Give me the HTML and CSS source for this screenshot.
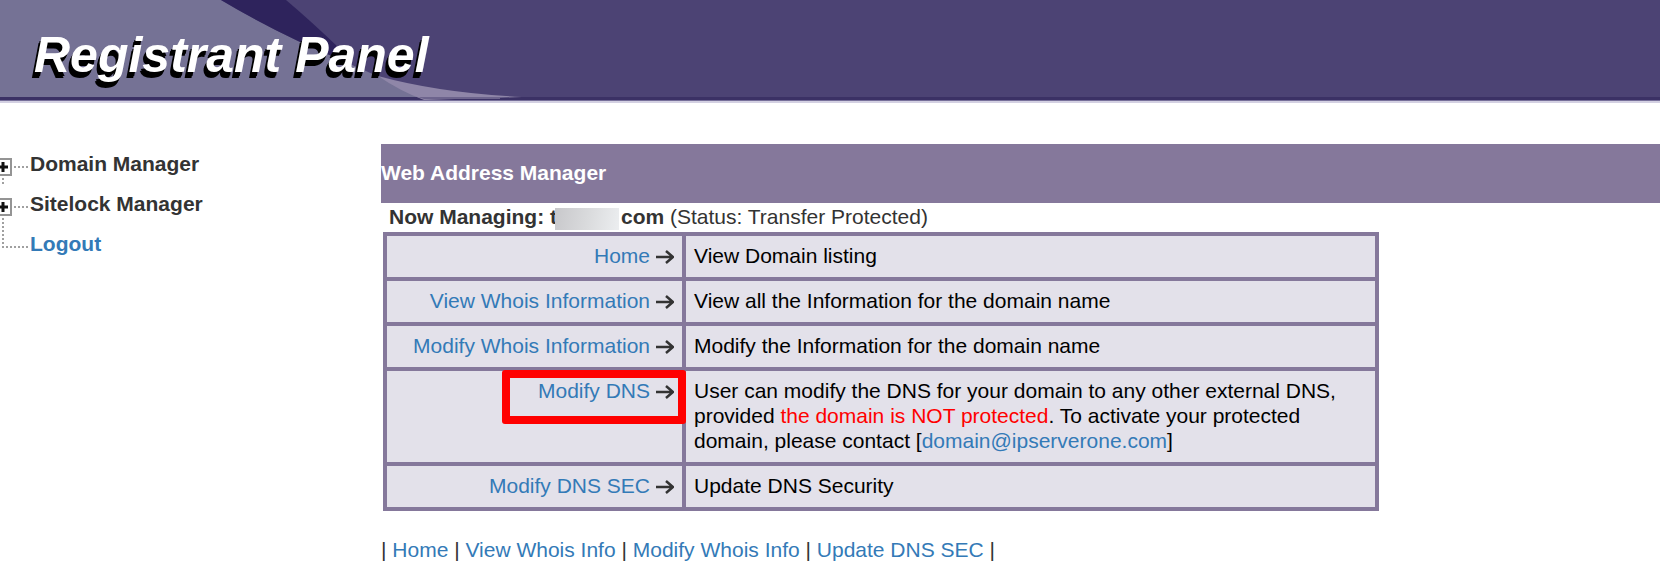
FILE: index.html
```html
<!DOCTYPE html>
<html lang="en">
<head>
  <meta charset="UTF-8" />
  <meta name="viewport" content="width=device-width, initial-scale=1.0"/>
  <title>Registrant Panel</title>
  <link rel="stylesheet" href="styles.css">
</head>
<body>

  <!-- Banner -->
  <header class="banner">
    <svg class="banner-art" width="560" height="103" viewBox="0 0 560 103" aria-hidden="true">
      <path d="M0 0H221Q258 22 298 41Q345 62 382 78Q400 89 418 97H0Z" fill="#757295"/>
      <path d="M221 0H286Q312 22 340 49L350 64L298 41Q258 22 221 0Z" fill="#2e235c"/>
      <path d="M378 76Q440 93 522 97L424 100Q400 91 378 76Z" fill="#8f86a8"/>
      <path d="M418 97H500V99H424Z" fill="#6d648d"/>
    </svg>
    <h1 class="banner-title">Registrant Panel</h1>
  </header>

  <div class="layout">
    <!-- Tree menu -->
    <nav class="sidebar">
      <ul class="tree">
        <li>
          <svg width="30" height="40" viewBox="0 0 30 40" aria-hidden="true">
            <path d="M3 28V34" class="dots"/>
            <path d="M14 17H30" class="dots"/>
            <path d="M-4 9H11V25H-4Z" class="node"/>
            <path d="M-2 17H8M3 12V22" class="plus"/>
          </svg>
          <b>Domain Manager</b>
        </li>
        <li>
          <svg width="30" height="40" viewBox="0 0 30 40" aria-hidden="true">
            <path d="M3 28V40" class="dots"/>
            <path d="M14 17H30" class="dots"/>
            <path d="M-4 9H11V25H-4Z" class="node"/>
            <path d="M-2 17H8M3 12V22" class="plus"/>
          </svg>
          <b>Sitelock Manager</b>
        </li>
        <li>
          <svg width="30" height="40" viewBox="0 0 30 40" aria-hidden="true">
            <path d="M3 0V17H30" class="dots"/>
          </svg>
          <a href="#"><b>Logout</b></a>
        </li>
      </ul>
    </nav>

    <main class="content">
      <h2 class="title-bar">Web Address Manager</h2>
      <p class="managing"><b>Now Managing: t<span class="redacted"></span>com</b> (Status: Transfer Protected)</p>

      <table class="options">
        <tr>
          <td class="action"><a href="#">Home</a><svg class="arrow" viewBox="0 0 18 16"><path d="M0 8H17M10 2L17 8L10 14"/></svg></td>
          <td>View Domain listing</td>
        </tr>
        <tr>
          <td class="action"><a href="#">View Whois Information</a><svg class="arrow" viewBox="0 0 18 16"><path d="M0 8H17M10 2L17 8L10 14"/></svg></td>
          <td>View all the Information for the domain name</td>
        </tr>
        <tr>
          <td class="action"><a href="#">Modify Whois Information</a><svg class="arrow" viewBox="0 0 18 16"><path d="M0 8H17M10 2L17 8L10 14"/></svg></td>
          <td>Modify the Information for the domain name</td>
        </tr>
        <tr>
          <td class="action"><a href="#">Modify DNS</a><svg class="arrow" viewBox="0 0 18 16"><path d="M0 8H17M10 2L17 8L10 14"/></svg><span class="marker"></span></td>
          <td>User can modify the DNS for your domain to any other external DNS, provided <span class="warning">the domain is NOT protected</span>. To activate your protected domain, please contact [<a href="#">domain@ipserverone.com</a>]</td>
        </tr>
        <tr>
          <td class="action"><a href="#">Modify DNS SEC</a><svg class="arrow" viewBox="0 0 18 16"><path d="M0 8H17M10 2L17 8L10 14"/></svg></td>
          <td>Update DNS Security</td>
        </tr>
      </table>

      <p class="links">| <a href="#">Home</a> | <a href="#">View Whois Info</a> | <a href="#">Modify Whois Info</a> | <a href="#">Update DNS SEC</a> |</p>
    </main>
  </div>

</body>
</html>
```
FILE: styles.css
```css
body {
  margin: 0;
  font-family: Arial, "Liberation Sans", sans-serif;
  font-size: 21px;
  line-height: 25px;
  color: #333;
  background: #fff;
}

a {
  color: #337ab7;
  text-decoration: none;
}

a:hover {
  text-decoration: underline;
}

/* Banner */
.banner {
  position: relative;
  height: 103px;
  background: linear-gradient(#4c4374 97px, #3b3165 97px, #3b3165 100px, #77709a 100px, #77709a 101px, #d3d0e2 101px);
}

.banner-art {
  position: absolute;
  top: 0;
  left: 0;
}

.banner-title {
  position: relative;
  margin: 0;
  padding: 25px 0 0 34px;
  font-size: 50px;
  line-height: 60px;
  font-style: italic;
  color: #fff;
  text-shadow: -3px 6px 0 #000, -2px 4px 0 #000;
}

.layout {
  display: flex;
  padding-top: 41px;
}

/* Tree menu */
.sidebar {
  flex: 0 0 381px;
}

.tree {
  margin: 0;
  padding: 6px 0 0;
  list-style: none;
}

.tree li {
  display: flex;
  height: 40px;
}

.tree b {
  line-height: 28px;
}

.dots {
  fill: none;
  stroke: #a0a0a0;
  stroke-width: 2;
  stroke-dasharray: 2 2;
}

.node {
  fill: #fff;
  stroke: #949494;
  stroke-width: 2;
}

.plus {
  stroke: #111;
  stroke-width: 3;
}

/* Content */
.content {
  flex: 1;
}

.title-bar {
  margin: 0;
  padding: 16px 0 18px;
  font-size: 21px;
  line-height: 25px;
  color: #fff;
  background: #85789b;
}

.managing {
  margin: 0;
  padding: 1px 8px 2px;
}

.redacted {
  display: inline-block;
  width: 64px;
  height: 22px;
  margin: 0 2px 0 -2px;
  vertical-align: -6px;
  background: linear-gradient(100deg, #c8c8cb, #d9dadc 50%, #eceef0);
}

.options {
  width: 78%;
  max-width: 996px;
  margin-left: 2px;
  border-spacing: 4px;
  background: #85789b;
}

.options td {
  padding: 7px 8px 9px;
  vertical-align: top;
  color: #000;
  background: #e3e1ea;
}

.options .action {
  position: relative;
  width: 279px;
  text-align: right;
}

.arrow {
  width: 18px;
  height: 16px;
  margin-left: 6px;
  vertical-align: -2px;
  fill: none;
  stroke: #333;
  stroke-width: 2.5;
}

.warning {
  color: #f00;
}

/* Red frame around the DNS option */
.marker {
  position: absolute;
  top: -1px;
  right: -4px;
  box-sizing: border-box;
  width: 184px;
  height: 54px;
  border: 8px solid #f00;
  border-radius: 3px;
  z-index: 1;
}

.links {
  margin: 0;
  padding: 26px 0;
}
```
